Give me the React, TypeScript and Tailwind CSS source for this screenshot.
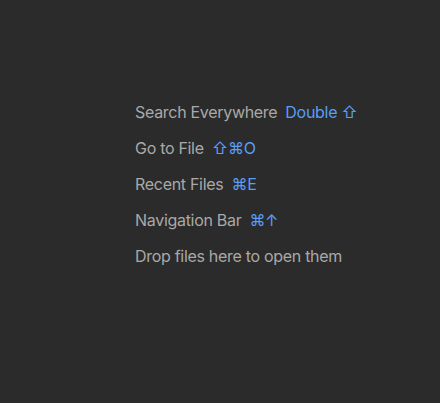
import React from "react";

type Hint = { label: string; keys?: string };

const hints: Hint[] = [
  { label: "Search Everywhere", keys: "Double ⇧" },
  { label: "Go to File", keys: "⇧⌘O" },
  { label: "Recent Files", keys: "⌘E" },
  { label: "Navigation Bar", keys: "⌘↑" },
  { label: "Drop files here to open them" },
];

export default function App() {
  return (
    <div
      className="min-h-screen w-full bg-[#2b2b2b] pt-[94px] pl-[135px]"
      style={{ fontFamily: "Inter, 'Noto Sans', 'DejaVu Sans', sans-serif" }}
    >
      <div className="flex flex-col">
        {hints.map((h) => (
          <div key={h.label} className="flex h-9 items-center gap-2 text-[16px] tracking-[-0.3px]">
            <span className="text-[#a9a9a9]">{h.label}</span>
            {h.keys && <span className="text-[#589df6]">{h.keys}</span>}
          </div>
        ))}
      </div>
    </div>
  );
}
